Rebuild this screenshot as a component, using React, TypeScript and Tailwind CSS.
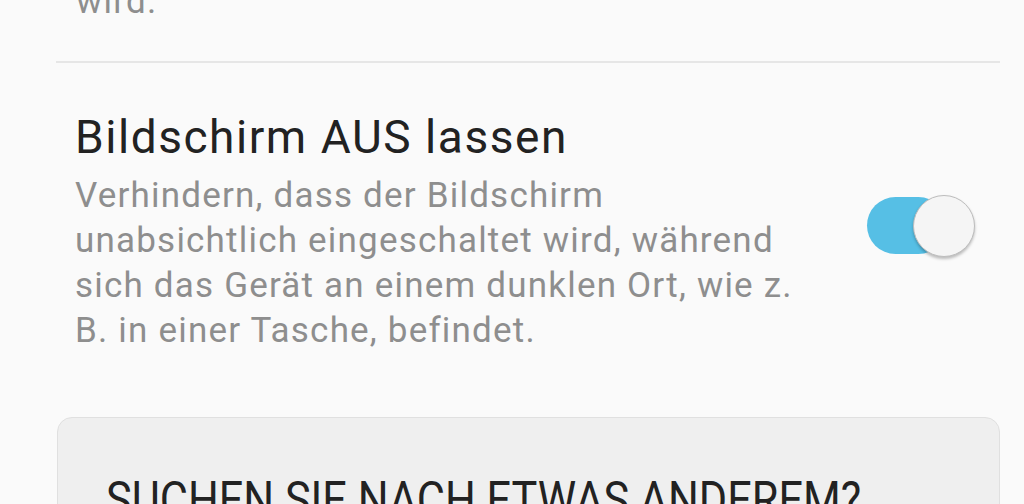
export default function App() {
  return (
    <div className="h-[504px] w-full overflow-hidden bg-[#fafafa] font-['Roboto',sans-serif]">
      {/* tail of the previous setting */}
      <div className="pl-[56px] pr-[24px]">
        <p className="-mt-[21px] pl-[20px] text-[35px] leading-[45px] tracking-[1.2px] text-[#8e8e8e]">wird.</p>
        <div className="mt-[37px] h-[2px] bg-[#e6e6e6]" />
      </div>

      <div className="flex items-center pl-[75px] pr-[49px] pt-[47px]">
        <div className="flex-1">
          <h2 className="text-[46px] leading-[54px] tracking-[1.55px] text-[#222222]">Bildschirm AUS lassen</h2>
          <p className="mt-[9px] text-[35px] leading-[45px] tracking-[1.2px] text-[#8e8e8e]">
            Verhindern, dass der Bildschirm
            <br />
            unabsichtlich eingeschaltet wird, während
            <br />
            sich das Gerät an einem dunklen Ort, wie z.
            <br />
            B. in einer Tasche, befindet.
          </p>
        </div>
        <div className="relative -mt-[12px] h-[62px] w-[108px] shrink-0">
          <div className="absolute left-0 top-[2px] h-[57px] w-[80px] rounded-full bg-[#56bfe5]" />
          <div className="absolute right-0 top-0 h-[62px] w-[62px] rounded-full border border-[#bdbdbd] bg-[#f5f5f5] shadow-[0_2px_3px_rgba(0,0,0,0.25)]" />
        </div>
      </div>

      <div className="ml-[57px] mr-[24px] mt-[64px] rounded-[15px] border border-[#e0e0e0] bg-[#efefef] px-[48px] pt-[56px] pb-[40px]">
        <h3 className="inline-block origin-left scale-x-[0.865] whitespace-nowrap text-[50px] font-normal leading-[52px] text-[#222222]">
          SUCHEN SIE NACH ETWAS ANDEREM?
        </h3>
      </div>
    </div>
  );
}
